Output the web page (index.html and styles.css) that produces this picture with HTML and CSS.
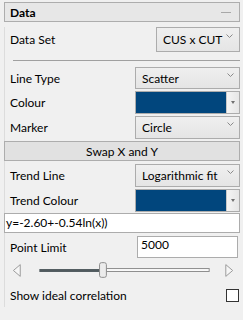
FILE: index.html
```html
<!DOCTYPE html>
<html lang="en">
<head>
    <meta charset="UTF-8">
    <title>Data</title>
    <link rel="stylesheet" href="styles.css">
</head>
<body>

    <div class="panel">
        <div class="panel-header">
            <span>Data</span>
            <span class="collapse-dash"></span>
        </div>

        <div class="panel-body">
            <div class="row row-dataset">
                <span>Data Set</span>
                <div class="select select-small">
                    <span>CUS x CUT</span>
                    <svg class="chevron" width="7" height="4" viewBox="0 0 7 4"><polyline points="0.5,0.5 3.5,3.5 6.5,0.5" fill="none" stroke="#8a8a8a"/></svg>
                </div>
            </div>

            <div class="separator"></div>

            <div class="row row-first">
                <span>Line Type</span>
                <div class="select">
                    <span>Scatter</span>
                    <svg class="chevron" width="7" height="4" viewBox="0 0 7 4"><polyline points="0.5,0.5 3.5,3.5 6.5,0.5" fill="none" stroke="#8a8a8a"/></svg>
                </div>
            </div>

            <div class="row">
                <span>Colour</span>
                <div class="colour-pick">
                    <div class="swatch"></div>
                    <div class="drop-btn"><span class="tri"></span></div>
                </div>
            </div>

            <div class="row">
                <span>Marker</span>
                <div class="select">
                    <span>Circle</span>
                    <svg class="chevron" width="7" height="4" viewBox="0 0 7 4"><polyline points="0.5,0.5 3.5,3.5 6.5,0.5" fill="none" stroke="#8a8a8a"/></svg>
                </div>
            </div>

            <button class="swap-btn">Swap X and Y</button>

            <div class="row row-trend">
                <span>Trend Line</span>
                <div class="select">
                    <span>Logarithmic fit</span>
                    <svg class="chevron" width="7" height="4" viewBox="0 0 7 4"><polyline points="0.5,0.5 3.5,3.5 6.5,0.5" fill="none" stroke="#8a8a8a"/></svg>
                </div>
            </div>

            <div class="row">
                <span>Trend Colour</span>
                <div class="colour-pick">
                    <div class="swatch"></div>
                    <div class="drop-btn"><span class="tri"></span></div>
                </div>
            </div>

            <div class="equation">y=-2.60+-0.54ln(x))</div>

            <div class="row row-limit">
                <span>Point Limit</span>
                <div class="text-box">5000</div>
            </div>

            <div class="slider-row">
                <svg width="236" height="17" viewBox="0 0 236 17">
                    <!-- left arrow -->
                    <polygon points="11.5,2.5 11.5,14.5 4.5,8.5" fill="#f6f6f6" stroke="#9a9a9a"/>
                    <!-- filled part of track -->
                    <rect x="31" y="7" width="62" height="3" fill="#505a5e"/>
                    <!-- rest of track -->
                    <rect x="99.5" y="6.5" width="105" height="3" fill="#fafafa" stroke="#8c8c8c"/>
                    <!-- thumb -->
                    <rect x="92.5" y="0.5" width="7" height="15" rx="2" fill="#ececec" stroke="#8c8c8c"/>
                    <!-- right arrow -->
                    <polygon points="221.5,2.5 221.5,14.5 228.5,8.5" fill="#f6f6f6" stroke="#9a9a9a"/>
                </svg>
            </div>

            <div class="row row-check">
                <span>Show ideal correlation</span>
                <span class="checkbox"></span>
            </div>
        </div>
    </div>

</body>
</html>
```

FILE: styles.css
```css
body {
    margin: 0;
    background: #f0f0f0;
    font-family: 'Lato', 'Noto Sans', sans-serif;
    font-size: 12px;
    color: #000;
}

.panel {
    width: 236px;
    margin: 2px 0 0 4px;
}

.panel-header {
    display: flex;
    justify-content: space-between;
    align-items: center;
    height: 18px;
    padding: 0 8px 0 5px;
    background: #e7e7e7;
    border: 1px solid #adadad;
    font-weight: bold;
}

.collapse-dash {
    width: 10px;
    height: 1px;
    background: #a8a8a8;
}

.panel-body {
    border-left: 1px solid #dcdcdc;
    padding-left: 5px;
    padding-bottom: 3px;
}

.row {
    display: flex;
    justify-content: space-between;
    align-items: center;
    height: 23px;
    margin-top: 2px;
    white-space: nowrap;
}

.row-dataset {
    height: 25px;
    margin-top: 5px;
}

.row-first {
    height: 22px;
    margin-top: 6px;
}

.row-trend {
    margin-top: 3px;
}

.separator {
    height: 1px;
    background: #a0a0a0;
    margin-top: 8px;
    margin-left: 3px;
}

.select {
    display: flex;
    justify-content: space-between;
    align-items: center;
    box-sizing: border-box;
    width: 105px;
    height: 100%;
    padding: 0 5px 0 6px;
    background: linear-gradient(#efefef, #e5e5e5);
    border: 1px solid #acacac;
}

.select-small {
    width: 84px;
    padding: 0 6px 0 6px;
}

.chevron {
    flex: none;
    margin-top: -7px;
}

.colour-pick {
    display: flex;
    box-sizing: border-box;
    width: 105px;
    height: 100%;
    border: 1px solid #acacac;
}

.swatch {
    flex: 1;
    background: #01467d;
}

.drop-btn {
    display: flex;
    justify-content: center;
    align-items: center;
    width: 12px;
    background: linear-gradient(to right, #f4f4f4, #e6e6e6);
    border-left: 1px solid #c8c8c8;
}

.tri {
    width: 0;
    height: 0;
    border-left: 2px solid transparent;
    border-right: 2px solid transparent;
    border-top: 3px solid #707070;
}

.swap-btn {
    display: block;
    box-sizing: border-box;
    width: 236px;
    height: 20px;
    margin: 2px 0 0 -6px;
    padding: 0;
    background: #e1e1e1;
    border: 1px solid #adadad;
    font-family: inherit;
    font-size: 12px;
    color: #000;
}

.equation {
    box-sizing: border-box;
    width: 236px;
    height: 20px;
    margin: 1px 0 0 -6px;
    padding: 0 1px;
    line-height: 18px;
    background: #fff;
    border: 1px solid #acacac;
}

.row-limit {
    height: 22px;
    margin-top: 3px;
    padding-right: 2px;
}

.text-box {
    box-sizing: border-box;
    width: 101px;
    height: 100%;
    padding: 0 3px;
    line-height: 16px;
    background: #fff;
    border: 1px solid #acacac;
}

.slider-row {
    display: flex;
    height: 17px;
    margin: 4px 0 0 -1px;
}

.row-check {
    height: 17px;
    margin-top: 8px;
    padding-right: 1px;
}

.checkbox {
    box-sizing: border-box;
    width: 13px;
    height: 13px;
    background: #fff;
    border: 1px solid #333;
}
```
